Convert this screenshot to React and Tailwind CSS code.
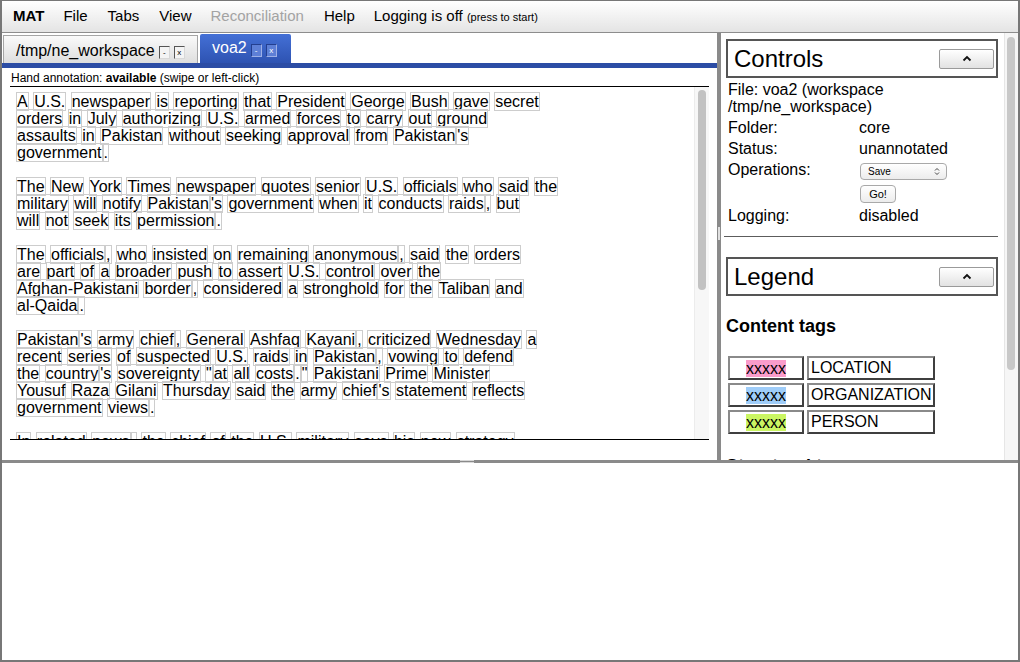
import React from 'react';

const PARAS = [
  [
    'A U.S. newspaper is reporting that President George Bush gave secret',
    'orders in July authorizing U.S. armed forces to carry out ground',
    "assaults in Pakistan without seeking approval from Pakistan|'s",
    'government|.',
  ],
  [
    'The New York Times newspaper quotes senior U.S. officials who said the',
    "military will notify Pakistan|'s government when it conducts raids|, but",
    'will not seek its permission|.',
  ],
  [
    'The officials|, who insisted on remaining anonymous|, said the orders',
    'are part of a broader push to assert U.S. control over the',
    'Afghan-Pakistani border|, considered a stronghold for the Taliban and',
    'al-Qaida|.',
  ],
  [
    "Pakistan|'s army chief|, General Ashfaq Kayani|, criticized Wednesday a",
    'recent series of suspected U.S. raids in Pakistan|, vowing to defend',
    'the country|\'s sovereignty "|at all costs|.|" Pakistani Prime Minister',
    "Yousuf Raza Gilani Thursday said the army chief|'s statement reflects",
    'government views|.',
  ],
  ['In related news|, the chief of the U.S. military says his new strategy'],
];

// menu label + right margin, tuned to the screenshot
const MENU = [
  ['File', 'mr-[20px]'],
  ['Tabs', 'mr-[20px]'],
  ['View', 'mr-[19px]'],
];

function DocLine({ text }) {
  const groups = text.split(' ');
  return (
    <div className="h-[17px] leading-[17px] whitespace-nowrap">
      {groups.map((g, i) => (
        <React.Fragment key={i}>
          {i > 0 && ' '}
          {g.split('|').map((t, j) => (
            <span key={j} className="border border-[#cdcdcd]">
              {t}
            </span>
          ))}
        </React.Fragment>
      ))}
    </div>
  );
}

function TabButton({ label, blue }) {
  return (
    <span
      className={
        blue
          ? 'w-[11px] h-[13px] flex items-center justify-center text-[8px] leading-none text-white bg-[#5d7fd6] border border-[#9db0e6] border-t-[#233f8f] border-l-[#233f8f]'
          : 'w-[11px] h-[13px] flex items-center justify-center text-[8px] leading-none text-black bg-[#f4f4f4] border border-[#d8d8d8] border-t-[#555] border-l-[#555]'
      }
    >
      {label}
    </span>
  );
}

function CollapseBox({ title }) {
  return (
    <div className="h-[39px] border-2 border-[#555] flex items-center justify-between pl-[6px] pr-[2px]">
      <span className="text-[24px] leading-none">{title}</span>
      <button className="w-[55px] h-[20px] rounded-[2px] border border-[#9a9a9a] bg-gradient-to-b from-white to-[#e2e2e2] flex items-center justify-center">
        <svg width="10" height="7" viewBox="0 0 10 7">
          <path d="M1.5 5.5 L5 2 L8.5 5.5" fill="none" stroke="#111" strokeWidth="1.8" />
        </svg>
      </button>
    </div>
  );
}

function InfoRow({ label, children }) {
  return (
    <div className="flex items-center h-[21px]">
      <span className="w-[131px] shrink-0">{label}</span>
      {children}
    </div>
  );
}

function TagRow({ color, name }) {
  return (
    <div className="flex gap-[3px] h-[24px]">
      <div className="w-[76px] border-2 border-[#8a8a8a] border-b-[#3f3f3f] border-r-[#3f3f3f] flex items-center justify-center">
        <span className={`${color} leading-[17px]`}>xxxxx</span>
      </div>
      <div className="w-[128px] border-2 border-[#8a8a8a] border-b-[#3f3f3f] border-r-[#3f3f3f] flex items-center pl-[2px]">
        {name}
      </div>
    </div>
  );
}

export default function App() {
  return (
    <div className="w-[1020px] h-[662px] flex flex-col bg-white border-2 border-t border-[#777] overflow-hidden font-['Liberation_Sans',Arial,sans-serif] text-black">
      {/* Menu bar */}
      <div className="h-[32px] shrink-0 flex items-center pl-[11px] border-b border-[#8d8d8d] bg-gradient-to-b from-white to-[#e4e4e4] text-[15px]">
        <span className="font-bold mr-[19px]">MAT</span>
        {MENU.map(([m, cls]) => (
          <span key={m} className={cls}>
            {m}
          </span>
        ))}
        <span className="mr-[20px] text-[#a3a3a3]">Reconciliation</span>
        <span className="mr-[19px]">Help</span>
        <span>
          Logging is off <span className="text-[11px]">(press to start)</span>
        </span>
      </div>

      {/* Top area */}
      <div className="relative h-[430px] shrink-0 flex border-b-[3px] border-[#8a8a8a]">
        {/* Left document pane */}
        <div className="w-[715px] shrink-0 flex flex-col min-h-0">
          <div className="h-[30px] shrink-0 flex items-end pl-[1px] gap-[2px]">
            <div className="h-[28px] w-[195px] flex items-start pt-[6px] pl-[12px] gap-[4px] border border-b-0 border-[#a5a5a5] bg-gradient-to-b from-[#fafafa] to-[#dedede]">
              <span className="text-[16px] leading-[18px]">/tmp/ne_workspace</span>
              <span className="flex gap-[4px] mt-[4px]">
                <TabButton label="-" />
                <TabButton label="x" />
              </span>
            </div>
            <div className="h-[29px] w-[91px] flex items-start pt-[5px] pl-[12px] gap-[4px] rounded-t-[2px] bg-gradient-to-b from-[#4470d6] to-[#2e53b2] text-white">
              <span className="text-[16px] leading-[18px]">voa2</span>
              <span className="flex gap-[4px] mt-[5px]">
                <TabButton label="-" blue />
                <TabButton label="x" blue />
              </span>
            </div>
          </div>
          <div className="h-[5px] shrink-0 bg-[#2c4da5]" />
          <div className="flex-1 min-h-0 flex flex-col px-[8px] pb-[20px]">
            <div className="h-[18px] shrink-0 pt-[3px] text-[12px] leading-[14px] pl-[1px]">
              Hand annotation: <b>available</b> (swipe or left-click)
            </div>
            <div className="flex-1 min-h-0 flex border-y border-black overflow-hidden">
              <div className="flex-1 pl-[6px] pt-[6px] text-[16px] overflow-hidden">
                {PARAS.map((p, i) => (
                  <div key={i} className={i > 0 ? 'mt-[17px]' : ''}>
                    {p.map((l, j) => (
                      <DocLine key={j} text={l} />
                    ))}
                  </div>
                ))}
              </div>
              <div className="w-[15px] shrink-0 bg-[#f7f7f7] border-l border-[#ececec] pt-[3px] pl-[3px]">
                <div className="w-[8px] h-[200px] rounded-full bg-[#c2c2c2]" />
              </div>
            </div>
          </div>
        </div>

        {/* Divider */}
        <div className="relative w-[4px] shrink-0 bg-[#8a8a8a]">
          <div className="absolute left-[1px] top-[194px] w-[2px] h-[13px] border-x border-[#e0e0e0]" />
        </div>

        {/* Right controls pane */}
        <div className="flex-1 flex overflow-hidden">
          <div className="flex-1 pl-[5px] pr-[6px] pt-[6px] text-[16px] overflow-hidden">
            <CollapseBox title="Controls" />
            <div className="pl-[2px] pt-[3px]">
              <div className="leading-[17px]">
                File: voa2 (workspace
                <br />
                /tmp/ne_workspace)
              </div>
              <div className="mt-[2px]">
                <InfoRow label="Folder:">core</InfoRow>
                <InfoRow label="Status:">unannotated</InfoRow>
                <div className="flex items-center h-[22px]">
                  <span className="w-[132px] shrink-0">Operations:</span>
                  <div className="w-[87px] h-[17px] mt-[2px] rounded-[4px] border border-[#a9a9a9] bg-gradient-to-b from-white to-[#ececec] flex items-center justify-between pl-[7px] pr-[6px] text-[10px]">
                    <span>Save</span>
                    <svg width="6" height="9" viewBox="0 0 6 9">
                      <path d="M1 3.5 L3 1.5 L5 3.5 M1 5.5 L3 7.5 L5 5.5" fill="none" stroke="#444" strokeWidth="1" />
                    </svg>
                  </div>
                </div>
                <div className="flex items-center h-[24px] pl-[132px]">
                  <div className="w-[36px] h-[18px] mt-[2px] rounded-[4px] border border-[#a9a9a9] bg-gradient-to-b from-white to-[#ececec] flex items-center justify-center text-[11px]">
                    Go!
                  </div>
                </div>
                <InfoRow label="Logging:">disabled</InfoRow>
              </div>
            </div>
            <div className="mt-[10px] -ml-[2px] border-t border-[#5c5c5c]" />
            <div className="mt-[20px]">
              <CollapseBox title="Legend" />
            </div>
            <div className="mt-[19px] text-[18px] font-bold leading-[22px]">Content tags</div>
            <div className="mt-[19px] ml-[2px] flex flex-col gap-[3px]">
              <TagRow color="bg-[#fa9ccb]" name="LOCATION" />
              <TagRow color="bg-[#9fcdf9]" name="ORGANIZATION" />
              <TagRow color="bg-[#cbf663]" name="PERSON" />
            </div>
            <div className="mt-[21px] text-[18px] font-bold leading-[22px]">Structural tags</div>
          </div>
          <div className="w-[14px] shrink-0 bg-[#f6f6f6] border-l border-[#e6e6e6] pt-[4px] pl-[2px]">
            <div className="w-[8px] h-[333px] rounded-full bg-[#c8c8c8]" />
          </div>
        </div>

        <div className="absolute left-[458px] -bottom-[3px] w-[14px] h-[3px] border-y border-[#d8d8d8]" />
      </div>

      {/* Bottom pane */}
      <div className="flex-1 bg-white" />
    </div>
  );
}
